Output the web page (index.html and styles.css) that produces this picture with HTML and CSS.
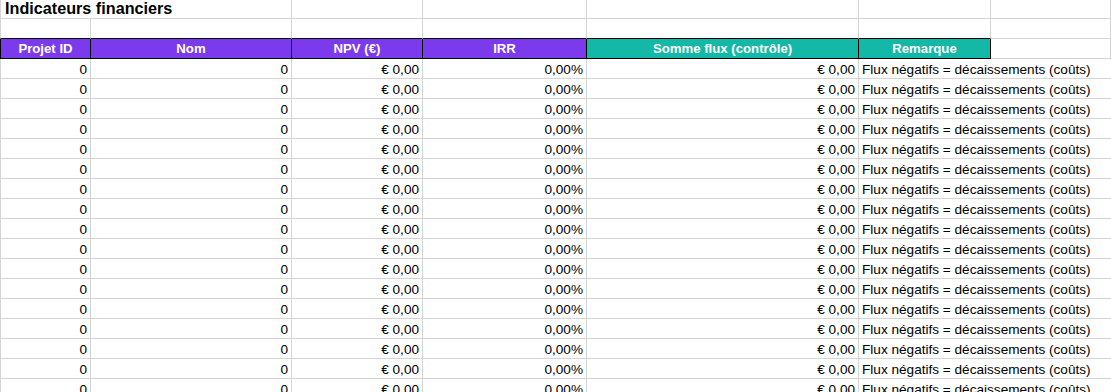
FILE: index.html
```html
<!DOCTYPE html>
<html lang="fr">
<head>
<meta charset="utf-8">
<title>Indicateurs financiers</title>
<link rel="stylesheet" href="styles.css">
</head>
<body>
<div class="sheet">
  <div class="c title span2 first">Indicateurs financiers</div>
  <div class="c"></div><div class="c"></div><div class="c"></div><div class="c"></div><div class="c"></div>

  <div class="c first pre"></div><div class="c pre"></div><div class="c pre"></div><div class="c pre"></div><div class="c pre"></div><div class="c pre"></div><div class="c"></div>

  <div class="c h purple first">Projet ID</div>
  <div class="c h purple">Nom</div>
  <div class="c h purple">NPV (€)</div>
  <div class="c h purple">IRR</div>
  <div class="c h teal">Somme flux (contrôle)</div>
  <div class="c h teal">Remarque</div>
  <div class="c"></div>

  <div class="c n first">0</div><div class="c n">0</div><div class="c n">€ 0,00</div><div class="c n">0,00%</div><div class="c n">€ 0,00</div><div class="c r">Flux négatifs = décaissements (coûts)</div>
  <div class="c n first">0</div><div class="c n">0</div><div class="c n">€ 0,00</div><div class="c n">0,00%</div><div class="c n">€ 0,00</div><div class="c r">Flux négatifs = décaissements (coûts)</div>
  <div class="c n first">0</div><div class="c n">0</div><div class="c n">€ 0,00</div><div class="c n">0,00%</div><div class="c n">€ 0,00</div><div class="c r">Flux négatifs = décaissements (coûts)</div>
  <div class="c n first">0</div><div class="c n">0</div><div class="c n">€ 0,00</div><div class="c n">0,00%</div><div class="c n">€ 0,00</div><div class="c r">Flux négatifs = décaissements (coûts)</div>
  <div class="c n first">0</div><div class="c n">0</div><div class="c n">€ 0,00</div><div class="c n">0,00%</div><div class="c n">€ 0,00</div><div class="c r">Flux négatifs = décaissements (coûts)</div>
  <div class="c n first">0</div><div class="c n">0</div><div class="c n">€ 0,00</div><div class="c n">0,00%</div><div class="c n">€ 0,00</div><div class="c r">Flux négatifs = décaissements (coûts)</div>
  <div class="c n first">0</div><div class="c n">0</div><div class="c n">€ 0,00</div><div class="c n">0,00%</div><div class="c n">€ 0,00</div><div class="c r">Flux négatifs = décaissements (coûts)</div>
  <div class="c n first">0</div><div class="c n">0</div><div class="c n">€ 0,00</div><div class="c n">0,00%</div><div class="c n">€ 0,00</div><div class="c r">Flux négatifs = décaissements (coûts)</div>
  <div class="c n first">0</div><div class="c n">0</div><div class="c n">€ 0,00</div><div class="c n">0,00%</div><div class="c n">€ 0,00</div><div class="c r">Flux négatifs = décaissements (coûts)</div>
  <div class="c n first">0</div><div class="c n">0</div><div class="c n">€ 0,00</div><div class="c n">0,00%</div><div class="c n">€ 0,00</div><div class="c r">Flux négatifs = décaissements (coûts)</div>
  <div class="c n first">0</div><div class="c n">0</div><div class="c n">€ 0,00</div><div class="c n">0,00%</div><div class="c n">€ 0,00</div><div class="c r">Flux négatifs = décaissements (coûts)</div>
  <div class="c n first">0</div><div class="c n">0</div><div class="c n">€ 0,00</div><div class="c n">0,00%</div><div class="c n">€ 0,00</div><div class="c r">Flux négatifs = décaissements (coûts)</div>
  <div class="c n first">0</div><div class="c n">0</div><div class="c n">€ 0,00</div><div class="c n">0,00%</div><div class="c n">€ 0,00</div><div class="c r">Flux négatifs = décaissements (coûts)</div>
  <div class="c n first">0</div><div class="c n">0</div><div class="c n">€ 0,00</div><div class="c n">0,00%</div><div class="c n">€ 0,00</div><div class="c r">Flux négatifs = décaissements (coûts)</div>
  <div class="c n first">0</div><div class="c n">0</div><div class="c n">€ 0,00</div><div class="c n">0,00%</div><div class="c n">€ 0,00</div><div class="c r">Flux négatifs = décaissements (coûts)</div>
  <div class="c n first">0</div><div class="c n">0</div><div class="c n">€ 0,00</div><div class="c n">0,00%</div><div class="c n">€ 0,00</div><div class="c r">Flux négatifs = décaissements (coûts)</div>
  <div class="c n first">0</div><div class="c n">0</div><div class="c n">€ 0,00</div><div class="c n">0,00%</div><div class="c n">€ 0,00</div><div class="c r">Flux négatifs = décaissements (coûts)</div>
</div>
</body>
</html>
```

FILE: styles.css
```css
html, body {
  margin: 0;
  padding: 0;
  background: #ffffff;
  overflow: hidden;
}

.sheet {
  display: grid;
  width: 100%;
  grid-template-columns: 91px 201px 131px 164px 272px 132px minmax(0, 1fr);
  grid-template-rows: 19px 20px 20px;
  grid-auto-rows: 20px;
  font-family: "Liberation Sans", Arial, sans-serif;
  font-size: 13.6px;
  color: #000000;
}

.c {
  box-sizing: border-box;
  border-right: 1px solid #d4d4d4;
  border-bottom: 1px solid #d4d4d4;
  padding: 3px 3px 0 3px;
  line-height: 16px;
  white-space: nowrap;
  overflow: visible;
  min-width: 0;
}

.first {
  border-left: 1px solid #d4d4d4;
}

.span2 {
  grid-column: span 2;
}

.title {
  font-weight: bold;
  font-size: 16.2px;
  padding: 0 0 0 4px;
  line-height: 16px;
}

.pre {
  border-bottom-color: #000000;
}

.h {
  color: #ffffff;
  font-weight: bold;
  font-size: 13.2px;
  text-align: center;
  padding-top: 2px;
  border-right-color: #000000;
  border-bottom-color: #000000;
}

.h.first {
  border-left-color: #000000;
}

.purple {
  background: #7c3aed;
}

.teal {
  background: #14b8a6;
}

.n {
  text-align: right;
}

.r {
  grid-column: span 2;
  border-right: none;
  text-align: left;
  padding-left: 3px;
}
```
